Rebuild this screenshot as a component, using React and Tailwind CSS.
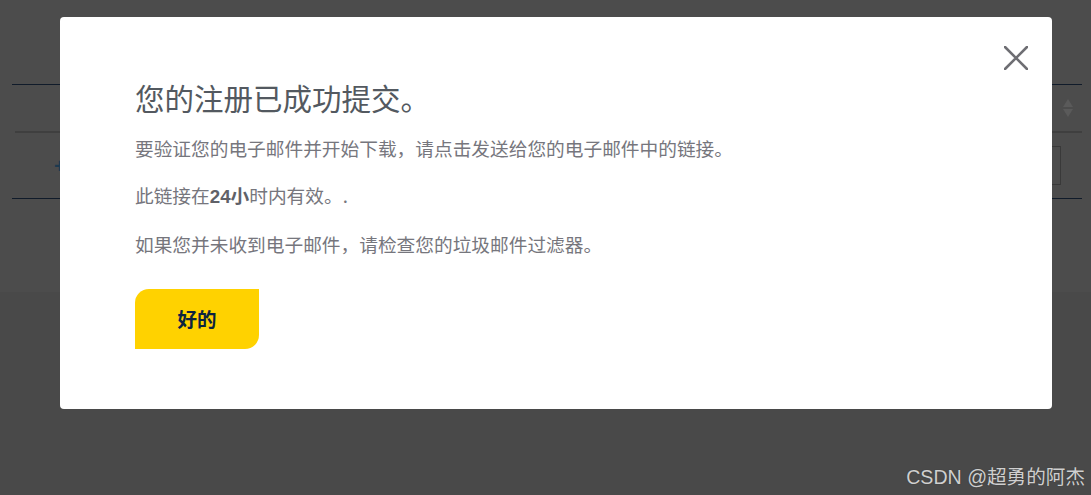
import React from "react";

export default function App() {
  return (
    <div className="relative w-[1091px] h-[495px] overflow-hidden flex flex-col bg-[#494949]" style={{ fontFamily: '"Liberation Sans", "Noto Sans CJK SC", sans-serif' }}>
      {/* dimmed page underneath */}
      <div className="h-[292px] bg-[#4c4c4c] pt-[84px] shrink-0">
        <div className="ml-[12px] mr-[9px] border-t border-[#101b2a]">
          <div className="h-[46px] flex items-center justify-end pr-[8px]">
            <svg width="12" height="20" viewBox="0 0 12 20">
              <path d="M6 1 L11 9 H1 Z" fill="#5a5a5a" />
              <path d="M6 19 L11 11 H1 Z" fill="#5a5a5a" />
            </svg>
          </div>
          <div className="ml-[3px] h-[2px] bg-[#3f3f3f]" />
          <div className="h-[65px] flex items-center justify-between">
            <div className="ml-[42px] text-[#1d3a4f] text-[20px] font-bold leading-none">+</div>
            <div className="w-[60px] h-[39px] border border-[#393939] mr-[21px] mb-[1px]" />
          </div>
        </div>
        <div className="mx-[12px] mr-[9px] border-t border-[#101b2a]" />
      </div>
      <div className="flex-1 flex items-end justify-end pr-[6px] pb-[5px]">
        <span className="text-[19.6px] text-[#cfcfcf] leading-[26px]" style={{ textShadow: "0 0 1px #333" }}>CSDN @超勇的阿杰</span>
      </div>

      {/* modal */}
      <div className="absolute left-[60px] top-[17px] w-[992px] h-[392px] bg-white rounded-[4px] pl-[75px] pt-[61px]" style={{ fontFamily: '"Noto Sans CJK SC", "Liberation Sans", sans-serif' }}>
        <button className="absolute left-[944px] top-[29px] w-[24px] h-[24px]">
          <svg width="24" height="24" viewBox="0 0 24 24">
            <path d="M1 1 L23 23 M23 1 L1 23" stroke="#6e6e73" strokeWidth="2.6" strokeLinecap="round" />
          </svg>
        </button>
        <h2 className="text-[29.5px] leading-[38px] text-[#535960] font-normal">您的注册已成功提交。</h2>
        <p className="mt-[18px] text-[18.7px] leading-[28px] text-[#76767d]">要验证您的电子邮件并开始下载，请点击发送给您的电子邮件中的链接。</p>
        <p className="mt-[19px] text-[18.7px] leading-[28px] text-[#76767d]">
          此链接在<b className="font-bold text-[#606168]" style={{ fontFamily: '"Liberation Sans", "Noto Sans CJK SC", sans-serif' }}>24</b><b className="font-bold text-[#606168]">小</b>时内有效。.
        </p>
        <p className="mt-[19px] text-[18.7px] leading-[28px] text-[#76767d]">如果您并未收到电子邮件，请检查您的垃圾邮件过滤器。</p>
        <button className="mt-[31px] w-[124px] h-[60px] bg-[#ffd200] rounded-tl-[14px] rounded-br-[14px] flex items-center justify-center text-[19.5px] font-bold text-[#0d2340]">
          好的
        </button>
      </div>
    </div>
  );
}
